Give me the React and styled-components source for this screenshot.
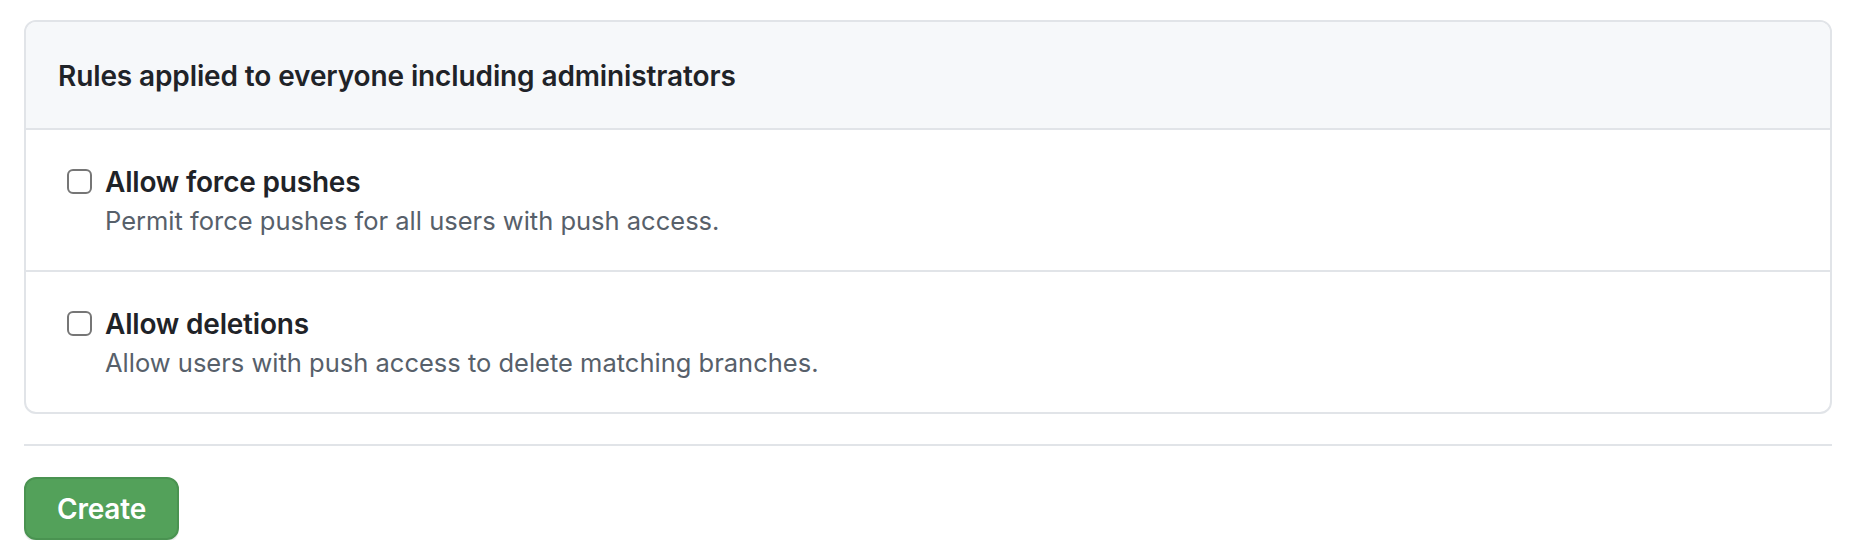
import React from 'react';
import styled, { createGlobalStyle } from 'styled-components';

const GlobalStyle = createGlobalStyle`
  html, body {
    margin: 0;
    padding: 0;
    background: #ffffff;
  }
  body {
    font-family: Inter, "Noto Sans", "Liberation Sans", sans-serif;
    color: #1f2328;
    -webkit-font-smoothing: antialiased;
  }
`;

const Page = styled.div`
  padding: 20px 28px 0 24px;
`;

const Box = styled.div`
  border: 2px solid #e1e4e8;
  border-radius: 12px;
  overflow: hidden;
`;

const BoxHeader = styled.div`
  background: #f6f8fa;
  border-bottom: 2px solid #e1e4e8;
  padding: 33px 32px 31px;
`;

const BoxTitle = styled.h3`
  margin: 0;
  font-size: 28px;
  line-height: 42px;
  font-weight: 600;
  letter-spacing: -0.12px;
  color: #1f2328;
`;

const Row = styled.label`
  display: flex;
  align-items: flex-start;
  gap: 13px;
  padding: 32px 32px 30px 41px;
  border-top: ${(p) => (p.$first ? 'none' : '2px solid #e1e4e8')};
  cursor: pointer;
`;

const Check = styled.span`
  flex: none;
  width: 25px;
  height: 25px;
  margin-top: 7px;
  box-sizing: border-box;
  border: 2px solid #767676;
  border-radius: 6px;
  background: #ffffff;
`;

const RowText = styled.div`
  display: flex;
  flex-direction: column;
`;

const RowTitle = styled.span`
  font-size: 28px;
  line-height: 40px;
  font-weight: 600;
  letter-spacing: -0.2px;
  color: #1f2328;
`;

const RowNote = styled.span`
  font-size: 25.5px;
  line-height: 38px;
  font-weight: 400;
  color: #57606a;
`;

const Divider = styled.hr`
  margin: 30px 0 0;
  border: 0;
  border-top: 2px solid #e1e4e8;
`;

const Actions = styled.div`
  padding-top: 31px;
`;

const PrimaryButton = styled.button`
  font-family: inherit;
  font-size: 28px;
  line-height: 40px;
  font-weight: 600;
  letter-spacing: -0.2px;
  color: #ffffff;
  background: #53a15a;
  border: 2px solid #4a9351;
  border-radius: 12px;
  padding: 10px 31px;
  height: 63px;
  box-shadow: 0 2px 0 rgba(27, 31, 35, 0.08);
  cursor: pointer;
`;

const rules = [
  {
    title: 'Allow force pushes',
    note: 'Permit force pushes for all users with push access.',
  },
  {
    title: 'Allow deletions',
    note: 'Allow users with push access to delete matching branches.',
  },
];

export default function App() {
  return (
    <>
      <GlobalStyle />
      <Page>
        <Box>
          <BoxHeader>
            <BoxTitle>Rules applied to everyone including administrators</BoxTitle>
          </BoxHeader>
          {rules.map((r, i) => (
            <Row key={r.title} $first={i === 0}>
              <Check />
              <RowText>
                <RowTitle>{r.title}</RowTitle>
                <RowNote>{r.note}</RowNote>
              </RowText>
            </Row>
          ))}
        </Box>
        <Divider />
        <Actions>
          <PrimaryButton>Create</PrimaryButton>
        </Actions>
      </Page>
    </>
  );
}
